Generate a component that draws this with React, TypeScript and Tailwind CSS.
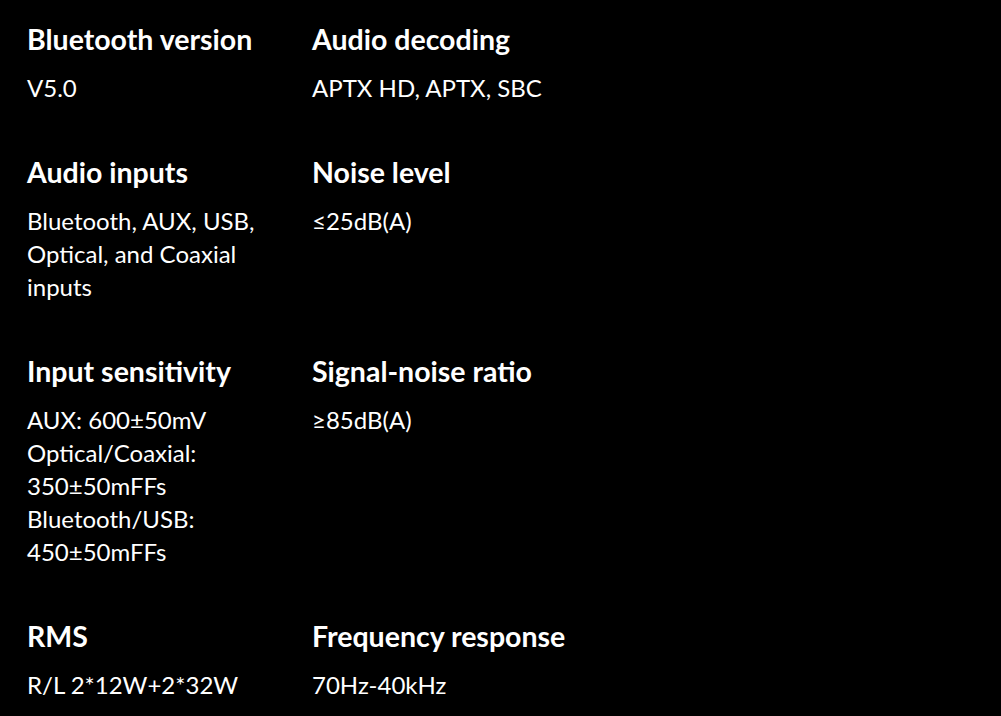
const specs = [
  [
    { title: "Bluetooth version", lines: ["V5.0"] },
    { title: "Audio decoding", lines: ["APTX HD, APTX, SBC"] },
  ],
  [
    { title: "Audio inputs", lines: ["Bluetooth, AUX, USB,", "Optical, and Coaxial", "inputs"] },
    { title: "Noise level", lines: ["≤25dB(A)"] },
  ],
  [
    {
      title: "Input sensitivity",
      lines: ["AUX: 600±50mV", "Optical/Coaxial:", "350±50mFFs", "Bluetooth/USB:", "450±50mFFs"],
    },
    { title: "Signal-noise ratio", lines: ["≥85dB(A)"] },
  ],
  [
    { title: "RMS", lines: ["R/L 2*12W+2*32W"] },
    { title: "Frequency response", lines: ["70Hz-40kHz"] },
  ],
];

export default function App() {
  return (
    <div
      className="w-[1001px] h-[716px] overflow-hidden bg-black text-white pl-[27px] pt-[19px]"
      style={{ fontFamily: "Lato, 'Open Sans', sans-serif" }}
    >
      <div className="flex flex-col gap-[48px]">
        {specs.map((row, i) => (
          <div key={i} className="flex">
            {row.map((spec) => (
              <div key={spec.title} className="w-[285px]">
                <h3 className="text-[28.5px] leading-[40px] font-bold">
                  {spec.title}
                </h3>
                <div className="mt-[12px] text-[24px] leading-[33px]">
                  {spec.lines.map((line) => (
                    <p key={line}>{line}</p>
                  ))}
                </div>
              </div>
            ))}
          </div>
        ))}
      </div>
    </div>
  );
}
